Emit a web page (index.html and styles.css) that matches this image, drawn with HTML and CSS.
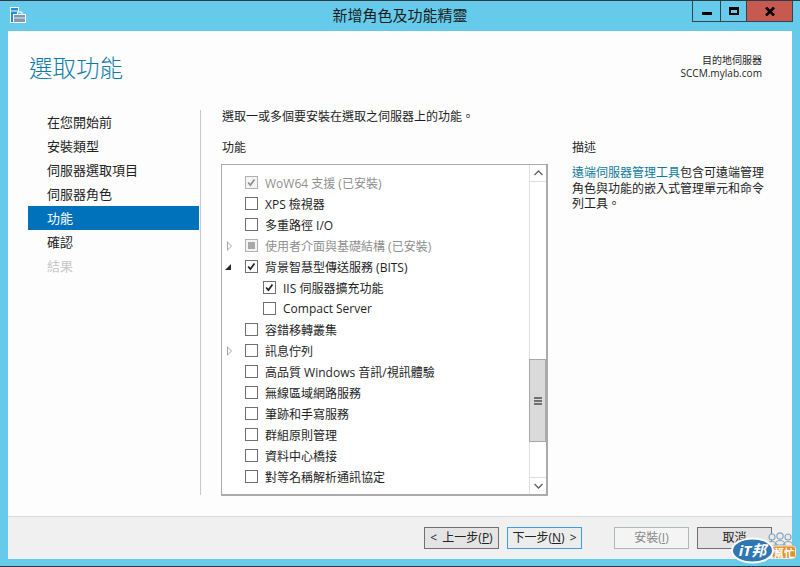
FILE: index.html
```html
<!DOCTYPE html>
<html lang="zh-Hant">
<head>
<meta charset="utf-8">
<title>新增角色及功能精靈</title>
<link rel="stylesheet" href="styles.css">
</head>
<body>
<div class="window">
  <header class="titlebar">
    <svg class="app-icon" width="17" height="17" viewBox="0 0 17 17">
      <rect x="0.5" y="0.5" width="8" height="15" fill="#1f8fdc" stroke="#fff"/>
      <rect x="1" y="3.500" width="7" height="1" fill="#fff"/>
      <rect x="3.500" y="7.500" width="12" height="8" fill="#8398a8" stroke="#fff"/>
      <path d="M7.500 7V5h4.500v2" fill="#66cbeb" stroke="#fff"/>
      <rect x="4" y="10.500" width="11" height="1" fill="#dfe6ea"/>
    </svg>
    <div class="title">新增角色及功能精靈</div>
    <div class="controls">
      <div class="ctl ctl-min"><span class="glyph-min"></span></div>
      <div class="ctl ctl-max"><span class="glyph-max"></span></div>
      <div class="ctl ctl-close">
        <svg width="10" height="9" viewBox="0 0 10 9"><path d="M1 0.500L9 8.500M9 0.500L1 8.500" stroke="#000" stroke-width="2.600" fill="none"/></svg>
      </div>
    </div>
  </header>
  <main class="content">
    <div class="head">
      <h1 class="page-title">選取功能</h1>
      <div class="dest">
        <div>目的地伺服器</div>
        <div class="dest-name">SCCM.mylab.com</div>
      </div>
    </div>
    <div class="body">
      <nav class="steps">
        <div class="step">在您開始前</div>
        <div class="step">安裝類型</div>
        <div class="step">伺服器選取項目</div>
        <div class="step">伺服器角色</div>
        <div class="step step-active">功能</div>
        <div class="step">確認</div>
        <div class="step step-off">結果</div>
      </nav>
      <section class="panel">
        <p class="intro">選取一或多個要安裝在選取之伺服器上的功能。</p>
        <div class="columns">
          <div class="features">
            <div class="col-head">功能</div>
            <div class="listbox">
              <div class="rows">
                <div class="row muted"><span class="exp"></span><span class="box box-off"><svg viewBox="0 0 13 13" width="11" height="11"><path d="M2.500 6.500L5.200 9.500L10 3" class="tick tick-off"/></svg></span>WoW64 支援 (已安裝)</div>
                <div class="row"><span class="exp"></span><span class="box"></span>XPS 檢視器</div>
                <div class="row"><span class="exp"></span><span class="box"></span>多重路徑 I/O</div>
                <div class="row muted"><span class="exp exp-closed"></span><span class="box box-off"><span class="partial"></span></span>使用者介面與基礎結構 (已安裝)</div>
                <div class="row"><span class="exp exp-open"></span><span class="box"><svg viewBox="0 0 13 13" width="11" height="11"><path d="M2.500 6.500L5.200 9.500L10 3" class="tick"/></svg></span>背景智慧型傳送服務 (BITS)</div>
                <div class="row child"><span class="box"><svg viewBox="0 0 13 13" width="11" height="11"><path d="M2.500 6.500L5.200 9.500L10 3" class="tick"/></svg></span>IIS 伺服器擴充功能</div>
                <div class="row child"><span class="box"></span>Compact Server</div>
                <div class="row"><span class="exp"></span><span class="box"></span>容錯移轉叢集</div>
                <div class="row"><span class="exp exp-closed"></span><span class="box"></span>訊息佇列</div>
                <div class="row"><span class="exp"></span><span class="box"></span>高品質 Windows 音訊/視訊體驗</div>
                <div class="row"><span class="exp"></span><span class="box"></span>無線區域網路服務</div>
                <div class="row"><span class="exp"></span><span class="box"></span>筆跡和手寫服務</div>
                <div class="row"><span class="exp"></span><span class="box"></span>群組原則管理</div>
                <div class="row"><span class="exp"></span><span class="box"></span>資料中心橋接</div>
                <div class="row"><span class="exp"></span><span class="box"></span>對等名稱解析通訊協定</div>
              </div>
              <div class="scrollbar">
                <div class="sb-btn">
                  <svg width="9" height="6" viewBox="0 0 9 6"><path d="M0.500 5L4.500 1L8.500 5" fill="none" stroke="#606060" stroke-width="1.300"/></svg>
                </div>
                <div class="sb-track">
                  <div class="sb-thumb"><span class="grip"></span></div>
                </div>
                <div class="sb-btn sb-down">
                  <svg width="9" height="6" viewBox="0 0 9 6"><path d="M0.500 1L4.500 5L8.500 1" fill="none" stroke="#606060" stroke-width="1.300"/></svg>
                </div>
              </div>
            </div>
          </div>
          <aside class="desc">
            <div class="desc-head">描述</div>
            <p class="desc-text"><span class="link">遠端伺服器管理工具</span>包含可遠端管理角色與功能的嵌入式管理單元和命令列工具。</p>
          </aside>
        </div>
      </section>
    </div>
    <footer class="footer">
      <button class="btn">&lt; 上一步(<u>P</u>)</button>
      <button class="btn btn-default">下一步(<u>N</u>) &gt;</button>
      <button class="btn btn-off btn-gap">安裝(<u>I</u>)</button>
      <button class="btn">取消</button>
    </footer>
  </main>
  <svg class="badge" width="66" height="34" viewBox="0 0 66 34">
    <g fill="#f4ead8" stroke="#7fa8cf" stroke-width="1.200">
      <circle cx="41" cy="7" r="3"/><circle cx="49" cy="6" r="3.200"/><circle cx="57" cy="7" r="3"/>
      <path d="M36 16c0-6 10-6 10 0zM44 15c0-6 10-6 10 0zM52 16c0-6 10-6 10 0z"/>
    </g>
    <rect x="41" y="16" width="23.500" height="12.500" rx="3" fill="#e88f2c" stroke="#fbe9cf"/>
    <text x="53" y="26.500" class="badge-sub">幫忙</text>
    <ellipse cx="21.500" cy="20.500" rx="21.500" ry="13" fill="#fff"/>
    <ellipse cx="21.500" cy="20.500" rx="19.500" ry="11" fill="#2f76b2"/>
    <text x="21.500" y="26" class="badge-main">iT邦</text>
  </svg>
</div>
</body>
</html>
```
FILE: styles.css
```css
* { box-sizing: border-box; }
html, body { margin: 0; padding: 0; }
body {
  width: 800px;
  height: 567px;
  overflow: hidden;
  font-family: "Open Sans", "Noto Sans CJK TC", sans-serif;
  font-size: 12px;
  color: #1e1e1e;
}
.window {
  position: relative;
  width: 800px;
  height: 567px;
  background: #66cbeb;
  border-top: 1px solid #2f3b44;
  border-bottom: 1px solid #2f3b44;
  display: flex;
  flex-direction: column;
  padding-bottom: 7px;
}
.titlebar {
  height: 30px;
  display: flex;
  position: relative;
  flex: none;
}
.app-icon { position: absolute; left: 10px; top: 6px; }
.title {
  flex: 1;
  text-align: center;
  font-size: 15px;
  line-height: 28px;
  color: #1a1a1a;
}
.controls {
  position: absolute;
  right: 7px;
  top: 0;
  display: flex;
  height: 21px;
  border: 1px solid #33434e;
  border-top: 0;
}
.ctl {
  height: 20px;
  display: flex;
  align-items: center;
  justify-content: center;
  border-left: 1px solid #33434e;
}
.ctl-min { width: 27px; border-left: 0; }
.ctl-max { width: 26px; }
.ctl-close { width: 46px; background: #c75a50; }
.glyph-min { width: 10px; height: 3px; background: #000; margin-top: 5px; }
.glyph-max { width: 10px; height: 8px; border: 2px solid #000; border-top-width: 3px; }
.content {
  flex: 1;
  margin: 0 8px;
  background: #fdfdfd;
  display: flex;
  flex-direction: column;
  min-height: 0;
}
.head {
  height: 79px;
  flex: none;
  display: flex;
  justify-content: space-between;
  padding: 0 30px 0 21px;
}
.page-title {
  margin: 19px 0 0;
  font-size: 23.500px;
  font-weight: 300;
  line-height: 36px;
  color: #0f7ba6;
}
.dest {
  margin-top: 23px;
  text-align: right;
  font-size: 10px;
  line-height: 13px;
}
.dest-name { font-size: 10.100px; }
.body {
  height: 385px;
  flex: none;
  display: flex;
}
.steps {
  width: 193px;
  flex: none;
  padding-left: 20px;
  border-right: 1px solid #c8c8c8;
}
.step {
  height: 24px;
  line-height: 24px;
  font-size: 13px;
  padding-left: 19px;
  width: 171px;
  color: #222;
}
.step-active { background: #0072bc; color: #fff; }
.step-off { color: #c8c8c8; }
.panel {
  flex: 1;
  padding-left: 21px;
  min-width: 0;
}
.intro {
  margin: 0;
  height: 31px;
  line-height: 14px;
}
.columns { display: flex; margin-left: -1px; }
.features { width: 327px; flex: none; }
.col-head {
  height: 23px;
  line-height: 14px;
  padding-left: 1px;
}
.listbox {
  height: 332px;
  border: 1px solid #ababab;
  border-right-width: 2px;
  border-bottom-width: 2px;
  display: flex;
  background: #fff;
}
.rows { flex: 1; padding-top: 7px; }
.row {
  height: 21px;
  display: flex;
  align-items: center;
  white-space: nowrap;
}
.row.child { padding-left: 41px; }
.muted { color: #8f8f8f; }
.exp {
  width: 23px;
  flex: none;
  height: 10px;
  position: relative;
}
.exp-closed::before {
  content: "";
  position: absolute;
  left: 5px;
  top: 0;
  border-left: 5px solid #a6a6a6;
  border-top: 5px solid transparent;
  border-bottom: 5px solid transparent;
}
.exp-closed::after {
  content: "";
  position: absolute;
  left: 6px;
  top: 2px;
  border-left: 3px solid #fff;
  border-top: 3px solid transparent;
  border-bottom: 3px solid transparent;
}
.exp-open::before {
  content: "";
  position: absolute;
  left: 3px;
  top: 2px;
  border-right: 6px solid #2a2a2a;
  border-top: 6px solid transparent;
}
.box {
  width: 13px;
  height: 13px;
  flex: none;
  border: 1px solid #6f6f6f;
  background: #fff;
  margin-right: 7px;
  display: flex;
  align-items: center;
  justify-content: center;
}
.box-off { border-color: #b0b0b0; background: #f4f4f4; }
.partial { width: 7px; height: 7px; background: #a8a8a8; }
.tick { fill: none; stroke: #222; stroke-width: 2; }
.tick-off { stroke: #8e8e8e; }
.scrollbar {
  width: 17px;
  flex: none;
  border-left: 1px solid #e0e0e0;
  display: flex;
  flex-direction: column;
}
.sb-btn {
  height: 17px;
  flex: none;
  display: flex;
  align-items: center;
  justify-content: center;
  border-bottom: 1px solid #dedede;
}
.sb-down { border-bottom: 0; border-top: 1px solid #dedede; }
.sb-track { flex: 1; padding-top: 177px; }
.sb-thumb {
  height: 83px;
  margin-left: -1px;
  background: #dadada;
  border: 1px solid #a8a8a8;
  display: flex;
  align-items: center;
  justify-content: center;
}
.grip {
  width: 8px;
  height: 8px;
  background: repeating-linear-gradient(#707070 0, #707070 2px, transparent 2px, transparent 3px);
}
.desc { margin-left: 24px; width: 195px; }
.desc-head { height: 24px; line-height: 14px; }
.desc-text { margin: 0; line-height: 15.500px; }
.link { color: #0e7a9c; }
.footer {
  margin-top: 21px;
  flex: 1;
  background: #f0f0f0;
  border-top: 1px solid #d9d9d9;
  display: flex;
  align-items: flex-start;
  padding: 10px 0 0 416px;
  gap: 8px;
}
.btn {
  width: 75px;
  height: 22px;
  padding: 0;
  font: inherit;
  word-spacing: 2px;
  color: #222;
  background: #e4e4e4;
  border: 1px solid #707070;
  line-height: 18px;
}
.btn-default { background: #ececec; border: 1px solid #3c9beb; }
.btn-off { background: #f4f4f4; border-color: #b0b7ba; color: #8a8a8a; }
.btn-gap { margin-left: 24px; }
.badge { position: absolute; left: 731px; top: 529px; }
.badge-main { fill: #fff; font-size: 15px; font-weight: 700; font-style: italic; text-anchor: middle; }
.badge-sub { fill: #fff; font-size: 10.500px; font-weight: 700; text-anchor: middle; }
```
